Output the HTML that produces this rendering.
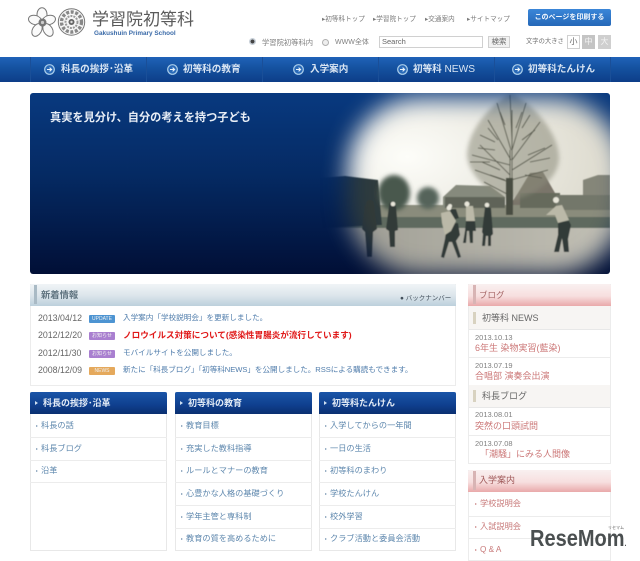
<!DOCTYPE html>
<html lang="ja"><head><meta charset="utf-8"><title>学習院初等科</title>
<style>
html,body{margin:0;padding:0;background:#fff}
body{width:640px;height:561px;position:relative;overflow:hidden;font-family:"Liberation Sans","Noto Sans CJK JP",sans-serif}
#w{position:absolute;left:0;top:0;width:640px;height:561px;filter:blur(.35px)}
.t{position:absolute;white-space:nowrap;line-height:1}
.b{position:absolute;box-sizing:border-box}
.nv{color:#d9e5f3;font-size:9.6px;font-weight:bold;top:65px}
.ci{position:absolute;top:64px;width:11px;height:11px}
.tl{color:#7a7a7a;font-size:6.6px;top:17px}
.d{color:#666;font-size:8.8px;left:38px}
.lk{color:#4f7cab;font-size:7.6px;left:123px}
.tag{position:absolute;left:89px;width:26px;height:8px;border-radius:1px;color:#f0f0f0;font-size:5px;line-height:8px;text-align:center}
.box{position:absolute;top:392px;height:159px;width:137px;border:1px solid #e8e8e8;border-top:0;box-sizing:border-box}
.hd{position:absolute;top:392px;height:22px;width:137px;border-radius:2px 2px 0 0;background:linear-gradient(#1a55a8,#0f3f8e 60%,#0a2f70);color:#e4ecf6;font-size:9px;font-weight:bold;line-height:22px;box-sizing:border-box;padding-left:13px}
.hd:before{content:"";position:absolute;left:5px;top:9px;border-left:3px solid #cfe0f2;border-top:2px solid transparent;border-bottom:2px solid transparent}
.hr{position:absolute;height:1px;background:#ececec}
.c{color:#5f88ae;font-size:8.2px}
.c:before{content:"";position:absolute;left:-5px;top:3px;border-left:2.5px solid #7a97b3;border-top:1.5px solid transparent;border-bottom:1.5px solid transparent}
.r{color:#cc7878;font-size:9px;left:475px}
.sd{color:#808080;font-size:7.5px;left:475px}
.sh{position:absolute;left:469px;width:141px;background:#f7f5f3;border-bottom:1px solid #e8e8e8;box-sizing:border-box}
.pk{position:absolute;left:468px;width:143px;height:22px;background:linear-gradient(#f9f0f0,#f7dfdf 55%,#e9a9aa);border-radius:2px 2px 0 0}
.rc{color:#c87a7a;font-size:8.2px}
.rc:before{content:"";position:absolute;left:-5px;top:3px;border-left:2.5px solid #c88;border-top:1.5px solid transparent;border-bottom:1.5px solid transparent}
</style></head><body>
<div id="w">

<svg class="b" style="left:28px;top:7px" width="60" height="31" viewBox="0 0 60 31">
 <g fill="#fafafa" stroke="#777" stroke-width="1">
  <ellipse cx="14" cy="7.5" rx="5" ry="6.8"/>
  <ellipse cx="7" cy="13" rx="6.6" ry="4.6" transform="rotate(15 7 13)"/>
  <ellipse cx="21" cy="13" rx="6.6" ry="4.6" transform="rotate(-15 21 13)"/>
  <ellipse cx="9" cy="23" rx="4.5" ry="6.8" transform="rotate(30 9 23)"/>
  <ellipse cx="20" cy="23" rx="4.5" ry="6.8" transform="rotate(-30 20 23)"/>
 </g>
 <circle cx="14.5" cy="15.5" r="4" fill="#777"/><circle cx="14.5" cy="15.5" r="1.6" fill="#ccc"/>
 <circle cx="43.5" cy="15" r="13.2" fill="#f6f6f6" stroke="#777" stroke-width="1"/>
 <circle cx="43.5" cy="15" r="10" fill="none" stroke="#888" stroke-width="3.4" stroke-dasharray="3 1.6"/>
 <circle cx="43.5" cy="15" r="6" fill="none" stroke="#999" stroke-width="2" stroke-dasharray="2 1"/>
 <circle cx="43.5" cy="15" r="3" fill="#666"/><circle cx="43.5" cy="15" r="1.2" fill="#ddd"/>
</svg>
<div class="t" style="left:92px;top:11px;font-size:17px;color:#5a5a5a">学習院初等科</div>
<div class="t" style="left:94px;top:30.5px;font-size:6.4px;color:#3a6aa8;font-weight:bold">Gakushuin Primary School</div>

<div class="t tl" style="left:322px">▸初等科トップ</div>
<div class="t tl" style="left:373px">▸学習院トップ</div>
<div class="t tl" style="left:425px">▸交通案内</div>
<div class="t tl" style="left:467px">▸サイトマップ</div>
<div class="b" style="left:528px;top:9px;width:83px;height:17px;border-radius:2px;background:linear-gradient(#3a86d8,#2568b8);color:#f2f7fc;font-size:7px;font-weight:bold;line-height:17px;text-align:center">このページを印刷する</div>

<div class="b" style="left:249px;top:38px;width:7px;height:7px;border-radius:50%;background:radial-gradient(circle,#444 0 35%,#c8d0d8 45%)"></div>
<div class="t" style="left:262px;top:38.5px;font-size:7.3px;color:#808080">学習院初等科内</div>
<div class="b" style="left:322px;top:39px;width:7px;height:7px;border-radius:50%;border:1px solid #b0b0b0;background:#eee"></div>
<div class="t" style="left:335px;top:38.5px;font-size:7px;color:#808080">WWW全体</div>
<div class="b" style="left:379px;top:36px;width:104px;height:12px;border:1px solid #d0d0d0;background:#fff;color:#666;font-size:7.5px;line-height:10px;padding-left:2px">Search</div>
<div class="b" style="left:488px;top:36px;width:22px;height:12px;border:1px solid #d0d0d0;background:#f2f2f2;color:#666;font-size:7.5px;line-height:10px;text-align:center">検索</div>
<div class="t" style="left:526px;top:39px;font-size:6.3px;color:#707070">文字の大きさ</div>
<div class="b" style="left:567px;top:35px;width:13px;height:14px;border:1px solid #d0d0d0;background:#fff;color:#666;font-size:8px;line-height:12px;text-align:center">小</div>
<div class="b" style="left:582px;top:35px;width:13px;height:14px;background:#c4c4c4;color:#f4f4f4;font-size:8px;line-height:14px;text-align:center">中</div>
<div class="b" style="left:598px;top:35px;width:13px;height:14px;background:#cfcfcf;color:#f4f4f4;font-size:8px;line-height:14px;text-align:center">大</div>

<div class="b" style="left:0;top:57px;width:640px;height:25px;background:linear-gradient(#1f62b8,#14519f 45%,#0d3d88)"></div>
<div class="b" style="left:30px;top:57px;width:1px;height:25px;background:#1a4f98"></div>
<div class="b" style="left:146px;top:57px;width:1px;height:25px;background:#1a4f98"></div>
<div class="b" style="left:262px;top:57px;width:1px;height:25px;background:#1a4f98"></div>
<div class="b" style="left:378px;top:57px;width:1px;height:25px;background:#1a4f98"></div>
<div class="b" style="left:494px;top:57px;width:1px;height:25px;background:#1a4f98"></div>
<div class="b" style="left:610px;top:57px;width:1px;height:25px;background:#1a4f98"></div>

<svg class="ci" style="left:44px" viewBox="0 0 11 11"><circle cx="5.5" cy="5.5" r="4.8" fill="#2a6ab8" stroke="#a9cdea" stroke-width="1.2"/><path d="M3 5.5H7.5M5.6 3.6L7.6 5.5L5.6 7.4" fill="none" stroke="#eaf3fb" stroke-width="1.1"/></svg>
<div class="t nv" style="left:61px">科長の挨拶･沿革</div>
<svg class="ci" style="left:167px" viewBox="0 0 11 11"><circle cx="5.5" cy="5.5" r="4.8" fill="#2a6ab8" stroke="#a9cdea" stroke-width="1.2"/><path d="M3 5.5H7.5M5.6 3.6L7.6 5.5L5.6 7.4" fill="none" stroke="#eaf3fb" stroke-width="1.1"/></svg>
<div class="t nv" style="left:183px">初等科の教育</div>
<svg class="ci" style="left:293px" viewBox="0 0 11 11"><circle cx="5.5" cy="5.5" r="4.8" fill="#2a6ab8" stroke="#a9cdea" stroke-width="1.2"/><path d="M3 5.5H7.5M5.6 3.6L7.6 5.5L5.6 7.4" fill="none" stroke="#eaf3fb" stroke-width="1.1"/></svg>
<div class="t nv" style="left:310px">入学案内</div>
<svg class="ci" style="left:397px" viewBox="0 0 11 11"><circle cx="5.5" cy="5.5" r="4.8" fill="#2a6ab8" stroke="#a9cdea" stroke-width="1.2"/><path d="M3 5.5H7.5M5.6 3.6L7.6 5.5L5.6 7.4" fill="none" stroke="#eaf3fb" stroke-width="1.1"/></svg>
<div class="t nv" style="left:413px">初等科 <span style="font-weight:normal;font-size:10.2px">NEWS</span></div>
<svg class="ci" style="left:512px" viewBox="0 0 11 11"><circle cx="5.5" cy="5.5" r="4.8" fill="#2a6ab8" stroke="#a9cdea" stroke-width="1.2"/><path d="M3 5.5H7.5M5.6 3.6L7.6 5.5L5.6 7.4" fill="none" stroke="#eaf3fb" stroke-width="1.1"/></svg>
<div class="t nv" style="left:528px">初等科たんけん</div>

<svg class="b" style="left:0;top:0" width="640" height="561" viewBox="0 0 640 561">
 <defs>
  <linearGradient id="bg" x1="0" y1="0" x2="0" y2="1"><stop offset="0" stop-color="#08397f"/><stop offset=".45" stop-color="#052a63"/><stop offset="1" stop-color="#010f36"/></linearGradient>
  <filter id="bl" x="-30%" y="-30%" width="160%" height="160%"><feGaussianBlur stdDeviation="12"/></filter>
  <filter id="s"><feGaussianBlur stdDeviation=".6"/></filter>
  <filter id="s2"><feGaussianBlur stdDeviation="2"/></filter>
  <mask id="m" maskUnits="userSpaceOnUse" x="0" y="0" width="640" height="561"><rect x="348" y="98" width="276" height="176" rx="72" fill="#fff" filter="url(#bl)"/></mask>
  <clipPath id="hc"><rect x="30" y="93" width="580" height="181" rx="3"/></clipPath>
  <radialGradient id="sky" cx="0.3" cy="0.35" r="0.85"><stop offset="0" stop-color="#fdfdf9"/><stop offset="1" stop-color="#d6d3c5"/></radialGradient>
  <linearGradient id="gr" x1="0" y1="0" x2="1" y2="0"><stop offset="0" stop-color="#9c9b92"/><stop offset="1" stop-color="#c2c0b5"/></linearGradient>
 </defs>
 <g clip-path="url(#hc)">
  <rect x="30" y="93" width="580" height="181" fill="url(#bg)"/>
  <g mask="url(#m)">
   <rect x="320" y="93" width="290" height="181" fill="url(#sky)"/>
   <g filter="url(#s)">
    <rect x="320" y="205" width="290" height="13" fill="#8a8c7c"/>
    <rect x="320" y="217" width="290" height="11" fill="#5f6b5f"/>
    <rect x="320" y="228" width="290" height="46" fill="url(#gr)"/>
    <path d="M320 178L345 176 378 180 382 225 320 228Z" fill="#2f3b3c"/>
    <g filter="url(#s2)"><ellipse cx="394" cy="193" rx="16" ry="18" fill="#4a584e"/>
    <ellipse cx="428" cy="198" rx="11" ry="11" fill="#55635a"/></g>
    <path d="M518 193L530 173 543 172 555 193 560 205 510 205Z" fill="#7a756a"/>
    <path d="M443 197L456 185 490 186 505 197 505 208 443 208Z" fill="#868a7d"/>
    <rect x="445" y="197" width="60" height="11" fill="#5f6358"/>
    <path d="M583 195V180L598 175 610 175V195Z" fill="#858679"/>
    <rect x="520" y="193" width="40" height="15" fill="#666a5c"/>
    <rect x="556" y="195" width="54" height="15" fill="#73776a"/>
    <path d="M511 93C535 105 560 135 559 160 557 180 535 195 513 200 490 195 468 175 467 155 468 130 490 105 511 93Z" fill="#8b8b7a" opacity=".55" filter="url(#s2)"/>
    <g fill="none" stroke="#55574b" stroke-width=".8">
     <path d="M510 214V150M512 214V110M510 175L480 145M510 165L472 155M511 160L488 120M511 150L497 103M512 140L510 95M512 150L526 103M512 160L540 122M512 170L552 145M511 180L548 170M509 182L475 170M509 195L484 182"/>
     <path d="M488 128L498 140M478 148L495 150M500 112L505 125M522 112L516 128M535 130L522 140M545 148L528 155M482 162L500 170M470 162L490 162M480 135L495 142M530 115L522 128M550 158L530 162M542 178L525 175M490 175L505 180"/>
    </g>
    <rect x="506" y="178" width="7" height="37" fill="#4a4e42"/>
    <g fill="#333b38">
     <path d="M365 205h9l3 24-4 3-1 25h-5l-2-25-3-3z"/>
     <circle cx="370" cy="204" r="4"/>
     <path d="M389 206h7l2 24-3 1v16h-5l-1-16-3-2z"/>
     <circle cx="392" cy="205" r="3"/>
     <path d="M447 224l11-1 2 12-4 6 5 16-3 1-6-16-3 0-5 16-3-1 4-18z"/>
     <path d="M449 209h7l3 9-9 3z"/>
     <path d="M466 221l9 0 1 10-3 0 0 12-3 0-1-12-2 0-1 12-3 0 2-12z"/>
     <path d="M485 207l6 1 2 26-2 2 0 10-3 0 0-10-2 0-1 10-3 0 1-12-1-2z"/>
     <path d="M558 222l11-1 2 4-3 14 1 13-5 0-2-14-3 14-5 0 4-17z"/>
    </g>
    <g fill="#bbb9a8">
     <path d="M441 213l9-2 6 10-5 10-6 4-3-12z"/>
     <path d="M466 206l7 0 2 15-9 0z"/>
     <path d="M556 206l6-1 7 15-11 3-3-8-9 0z"/>
    </g>
    <g fill="#e8e6da">
     <circle cx="449" cy="208" r="2.4"/><circle cx="450" cy="206" r="2"/><circle cx="467" cy="204" r="2.5"/><circle cx="487" cy="205" r="2.3"/><circle cx="556" cy="200" r="3"/><circle cx="393" cy="204" r="2.3"/>
    </g>
   </g>
  </g>
 </g>
</svg>
<div class="t" style="left:50px;top:113px;font-size:11.2px;font-weight:bold;color:#e8eef6">真実を見分け、自分の考えを持つ子ども</div>

<div class="b" style="left:30px;top:284px;width:426px;height:102px;border:1px solid #ececec"></div>
<div class="b" style="left:30px;top:284px;width:426px;height:22px;background:linear-gradient(#f0f4f7,#dde6ec 50%,#bcd0dc);border-radius:2px 2px 0 0"></div>
<div class="b" style="left:34px;top:285px;width:3px;height:19px;background:#a9bac5"></div>
<div class="t" style="left:41px;top:291px;font-size:9.3px;color:#607480;font-weight:bold">新着情報</div>
<div class="t" style="left:400px;top:295.5px;font-size:6.5px;color:#44505c">● バックナンバー</div>

<div class="t d" style="top:313.6px">2013/04/12</div><div class="tag" style="top:315px;background:#4d94d2">UPDATE</div><div class="t lk" style="top:314px">入学案内「学校説明会」を更新しました。</div>
<div class="t d" style="top:330.6px">2012/12/20</div><div class="tag" style="top:332px;background:#a97fd0">お知らせ</div><div class="t" style="left:123px;top:331px;color:#e01818;font-size:8.6px;font-weight:bold">ノロウイルス対策について(感染性胃腸炎が流行しています)</div>
<div class="t d" style="top:348.6px">2012/11/30</div><div class="tag" style="top:350px;background:#a97fd0">お知らせ</div><div class="t lk" style="top:349px">モバイルサイトを公開しました。</div>
<div class="t d" style="top:365.6px">2008/12/09</div><div class="tag" style="top:367px;background:#e5a95c">NEWS</div><div class="t lk" style="top:366px;letter-spacing:-.05px">新たに「科長ブログ」「初等科NEWS」を公開しました。RSSによる購読もできます。</div>

<div class="box" style="left:30px"></div><div class="box" style="left:175px"></div><div class="box" style="left:319px"></div>
<div class="hd" style="left:30px">科長の挨拶･沿革</div><div class="hd" style="left:175px">初等科の教育</div><div class="hd" style="left:319px">初等科たんけん</div>
<div class="hr" style="left:30px;top:437px;width:137px"></div><div class="hr" style="left:30px;top:460px;width:137px"></div><div class="hr" style="left:30px;top:482px;width:137px"></div>
<div class="hr" style="left:175px;top:437px;width:137px"></div><div class="hr" style="left:175px;top:460px;width:137px"></div><div class="hr" style="left:175px;top:482px;width:137px"></div><div class="hr" style="left:175px;top:505px;width:137px"></div><div class="hr" style="left:175px;top:528px;width:137px"></div>
<div class="hr" style="left:319px;top:437px;width:137px"></div><div class="hr" style="left:319px;top:460px;width:137px"></div><div class="hr" style="left:319px;top:482px;width:137px"></div><div class="hr" style="left:319px;top:505px;width:137px"></div><div class="hr" style="left:319px;top:528px;width:137px"></div>

<div class="t c" style="left:41px;top:422px">科長の話</div>
<div class="t c" style="left:41px;top:445px">科長ブログ</div>
<div class="t c" style="left:41px;top:467px">沿革</div>
<div class="t c" style="left:186px;top:422px">教育目標</div>
<div class="t c" style="left:186px;top:445px">充実した教科指導</div>
<div class="t c" style="left:186px;top:467px">ルールとマナーの教育</div>
<div class="t c" style="left:186px;top:490px">心豊かな人格の基礎づくり</div>
<div class="t c" style="left:186px;top:513px">学年主管と専科制</div>
<div class="t c" style="left:186px;top:535px">教育の質を高めるために</div>
<div class="t c" style="left:330px;top:422px">入学してからの一年間</div>
<div class="t c" style="left:330px;top:445px">一日の生活</div>
<div class="t c" style="left:330px;top:467px">初等科のまわり</div>
<div class="t c" style="left:330px;top:490px">学校たんけん</div>
<div class="t c" style="left:330px;top:513px">校外学習</div>
<div class="t c" style="left:330px;top:535px">クラブ活動と委員会活動</div>

<div class="b" style="left:468px;top:284px;width:143px;height:180px;border:1px solid #ececec"></div>
<div class="pk" style="top:284px"></div><div class="b" style="left:473px;top:285px;width:3px;height:19px;background:#d8b4b4"></div>
<div class="t" style="left:479px;top:291px;font-size:8.5px;color:#a86a6a">ブログ</div>
<div class="sh" style="top:306px;height:24px"></div><div class="b" style="left:473px;top:312px;width:3px;height:12px;background:#d8d2c0"></div>
<div class="t" style="left:482px;top:314px;font-size:9px;color:#666">初等科 NEWS</div>
<div class="t sd" style="top:334px">2013.10.13</div><div class="t r" style="top:344px">6年生 染物実習(藍染)</div>
<div class="hr" style="left:468px;top:357px;width:143px"></div>
<div class="t sd" style="top:362px">2013.07.19</div><div class="t r" style="top:372px">合唱部 演奏会出演</div>
<div class="sh" style="top:385px;height:23px"></div><div class="b" style="left:473px;top:390px;width:3px;height:12px;background:#d8d2c0"></div>
<div class="t" style="left:482px;top:392px;font-size:9px;color:#666">科長ブログ</div>
<div class="t sd" style="top:411px">2013.08.01</div><div class="t r" style="top:422px">突然の口頭試問</div>
<div class="hr" style="left:468px;top:435px;width:143px"></div>
<div class="t sd" style="top:440px">2013.07.08</div><div class="t r" style="top:450px;left:480px">「潮騒」にみる人間像</div>

<div class="b" style="left:468px;top:470px;width:143px;height:91px;border:1px solid #ececec"></div>
<div class="pk" style="top:470px"></div><div class="b" style="left:473px;top:471px;width:3px;height:19px;background:#d8b4b4"></div>
<div class="t" style="left:479px;top:476px;font-size:9px;color:#a05a5a">入学案内</div>
<div class="hr" style="left:468px;top:516px;width:143px"></div><div class="hr" style="left:468px;top:538px;width:143px"></div>
<div class="t rc" style="left:480px;top:500px">学校説明会</div>
<div class="t rc" style="left:480px;top:523px">入試説明会</div>
<div class="t rc" style="left:480px;top:546px">Q &amp; A</div>
</div>

<div class="t" style="left:530px;top:527px;font-size:23px;font-weight:bold;color:#4a4f50;transform:scaleX(.87);transform-origin:left top;text-shadow:0 0 2px #fff">ReseMom<span style="font-size:8px">.</span></div>
<div class="t" style="left:608px;top:526px;font-size:4px;color:#666">リセマム</div>
</body></html>
